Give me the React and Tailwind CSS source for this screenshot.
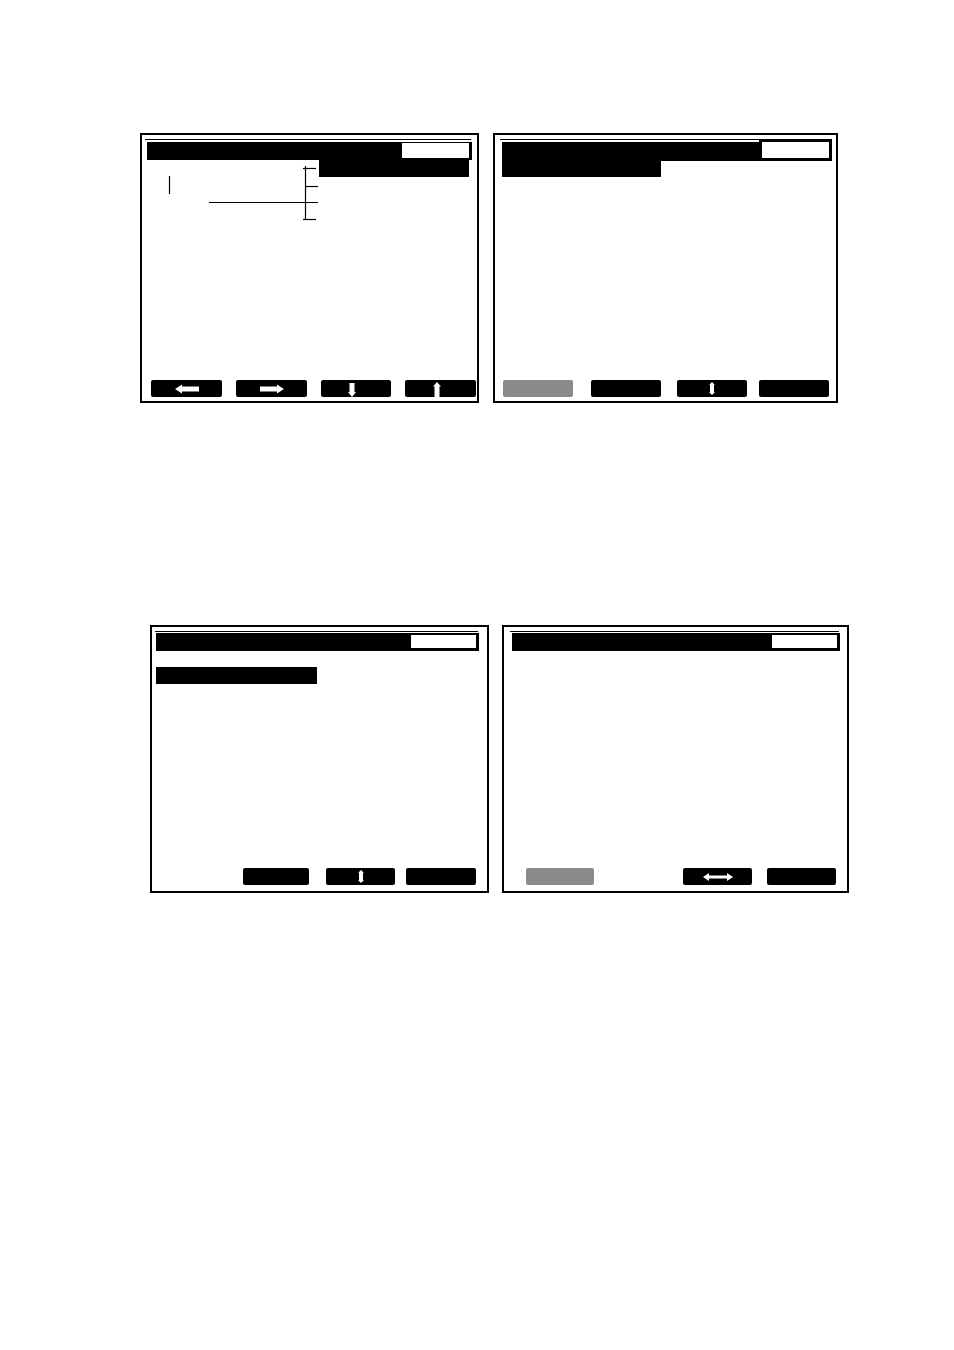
import React from "react";

const Btn = ({ className = "", gray = false, children, align = "items-center" }) => (
  <div
    className={`h-[17px] rounded-[2px] flex justify-center ${align} ${
      gray ? "bg-[#8a8a8a]" : "bg-black"
    } ${className}`}
  >
    {children}
  </div>
);

const ArrowLeft = () => (
  <svg width="24" height="10" viewBox="0 0 24 10">
    <polygon points="0,5 7,0.5 7,2.5 24,2.5 24,7.5 7,7.5 7,9.5" fill="white" />
  </svg>
);
const ArrowRight = () => (
  <svg width="24" height="10" viewBox="0 0 24 10">
    <polygon points="24,5 17,0.5 17,2.5 0,2.5 0,7.5 17,7.5 17,9.5" fill="white" />
  </svg>
);
const ArrowDown = () => (
  <svg width="8" height="14" viewBox="0 0 8 14">
    <polygon points="1.5,0 6.5,0 6.5,9 8,9 4,14 0,9 1.5,9" fill="white" />
  </svg>
);
const ArrowUp = () => (
  <svg width="8" height="15" viewBox="0 0 8 15">
    <polygon points="4,0 8,4.5 6.5,4.5 6.5,15 1.5,15 1.5,4.5 0,4.5" fill="white" />
  </svg>
);
const ArrowUpDown = () => (
  <svg width="6" height="13" viewBox="0 0 6 13">
    <polygon points="3,0 6,3 5,3 5,10 6,10 3,13 0,10 1,10 1,3 0,3" fill="white" />
  </svg>
);
const ArrowLeftRight = () => (
  <svg width="30" height="8" viewBox="0 0 30 8">
    <polygon
      points="0,4 6,0 6,2.5 24,2.5 24,0 30,4 24,8 24,5.5 6,5.5 6,8"
      fill="white"
    />
  </svg>
);

function Panel1() {
  return (
    <div className="w-[339px] h-[270px] border-2 border-black flex flex-col shrink-0">
      <div className="mt-[4px] ml-[3px] w-[326px] h-px bg-black" />
      <div className="mt-[2px] ml-[5px] w-[325px] h-[18px] bg-black flex justify-end items-start pt-px pr-[3px]">
        <div className="w-[67px] h-[15px] bg-white" />
      </div>
      <div className="flex">
        <svg width="177" height="62" viewBox="0 0 177 62" className="shrink-0">
          <g stroke="black" strokeWidth="1.2" fill="none">
            <line x1="163.5" y1="6" x2="163.5" y2="60" />
            <line x1="161" y1="8.5" x2="174" y2="8.5" />
            <line x1="163" y1="26.5" x2="176" y2="26.5" />
            <line x1="67" y1="42.5" x2="176" y2="42.5" />
            <line x1="161" y1="59.5" x2="174" y2="59.5" />
            <line x1="27.5" y1="16" x2="27.5" y2="34" />
          </g>
        </svg>
        <div className="w-[150px] h-[17px] bg-black" />
      </div>
      <div className="mt-auto mb-[4px] ml-[9px] flex gap-[14px]">
        <Btn className="w-[71px]">
          <ArrowLeft />
        </Btn>
        <Btn className="w-[71px]">
          <ArrowRight />
        </Btn>
        <Btn className="w-[70px] pr-[8px]" align="items-end">
          <ArrowDown />
        </Btn>
        <Btn className="w-[71px] pr-[8px]" align="items-end">
          <ArrowUp />
        </Btn>
      </div>
    </div>
  );
}

function Panel2() {
  return (
    <div className="w-[345px] h-[270px] border-2 border-black flex flex-col shrink-0">
      <div className="mt-[4px] flex">
        <div className="flex flex-col">
          <div className="ml-[5px] w-[259px] h-px bg-black" />
          <div className="mt-[2px] ml-[7px] w-[257px] h-[19px] bg-black" />
        </div>
        <div className="w-[73px] h-[22px] border-[3px] border-black bg-white" />
      </div>
      <div className="ml-[7px] w-[159px] h-[16px] bg-black" />
      <div className="mt-auto mb-[4px] flex">
        <Btn gray className="ml-[8px] w-[70px]" />
        <Btn className="ml-[18px] w-[70px]" />
        <Btn className="ml-[16px] w-[70px]">
          <ArrowUpDown />
        </Btn>
        <Btn className="ml-[12px] w-[70px]" />
      </div>
    </div>
  );
}

function Panel3() {
  return (
    <div className="w-[339px] h-[268px] border-2 border-black flex flex-col shrink-0">
      <div className="mt-[4px] ml-[3px] w-[323px] h-px bg-black" />
      <div className="mt-px ml-[4px] flex">
        <div className="w-[252px] h-[18px] bg-black" />
        <div className="w-[71px] h-[18px] border-[3px] border-t-2 border-black bg-white" />
      </div>
      <div className="mt-[16px] ml-[4px] w-[161px] h-[17px] bg-black" />
      <div className="mt-auto mb-[6px] flex">
        <Btn className="ml-[91px] w-[66px]" />
        <Btn className="ml-[17px] w-[69px]">
          <ArrowUpDown />
        </Btn>
        <Btn className="ml-[11px] w-[70px]" />
      </div>
    </div>
  );
}

function Panel4() {
  return (
    <div className="w-[347px] h-[268px] border-2 border-black flex flex-col shrink-0">
      <div className="mt-[4px] ml-[6px] w-[329px] h-px bg-black" />
      <div className="mt-px ml-[8px] flex">
        <div className="w-[257px] h-[18px] bg-black" />
        <div className="w-[71px] h-[18px] border-[3px] border-t-2 border-black bg-white" />
      </div>
      <div className="mt-auto mb-[6px] flex">
        <Btn gray className="ml-[22px] w-[68px]" />
        <Btn className="ml-[89px] w-[69px]">
          <ArrowLeftRight />
        </Btn>
        <Btn className="ml-[15px] w-[69px]" />
      </div>
    </div>
  );
}

export default function App() {
  return (
    <div className="w-[954px] h-[1350px] bg-white pt-[133px]">
      <div className="flex pl-[140px] gap-[14px]">
        <Panel1 />
        <Panel2 />
      </div>
      <div className="flex pl-[150px] gap-[13px] mt-[222px]">
        <Panel3 />
        <Panel4 />
      </div>
    </div>
  );
}
